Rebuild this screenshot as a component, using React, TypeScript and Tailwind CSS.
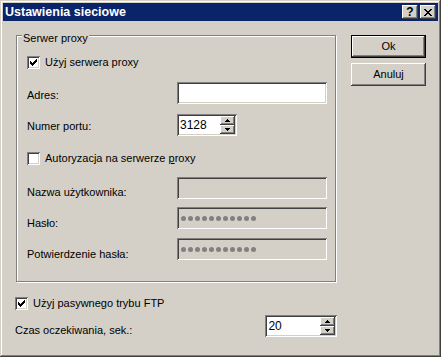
import React from "react";

const sunken =
  "shadow-[inset_1px_1px_0_#808080,inset_-1px_-1px_0_#ffffff,inset_2px_2px_0_#404040,inset_-2px_-2px_0_#d4d0c8]";
const raised =
  "shadow-[inset_-1px_-1px_0_#404040,inset_1px_1px_0_#ffffff,inset_-2px_-2px_0_#808080,inset_2px_2px_0_#d4d0c8]";

const Check = () => (
  <svg width="7" height="7" viewBox="0 0 7 7" shapeRendering="crispEdges">
    <path
      fill="#000"
      d="M6 0h1v1h-1z M5 1h2v1h-2z M0 2h1v1h-1z M4 2h3v1h-3z M0 3h2v1h-2z M3 3h3v1h-3z M0 4h5v1h-5z M1 5h3v1h-3z M2 6h1v1h-1z"
    />
  </svg>
);

const Checkbox = ({ checked, label }: { checked?: boolean; label: React.ReactNode }) => (
  <div className="flex items-center h-[13px]">
    <div className={`w-[13px] h-[13px] bg-white flex items-center justify-center ${sunken}`}>
      {checked && <Check />}
    </div>
    <span className="ml-[5px] leading-[13px]">{label}</span>
  </div>
);

const Field = ({
  width,
  disabled,
  children,
}: {
  width: string;
  disabled?: boolean;
  children?: React.ReactNode;
}) => (
  <div
    className={`${width} h-[22px] flex items-center pl-[4px] ${disabled ? "bg-[#d4d0c8]" : "bg-white"} ${sunken}`}
  >
    {children}
  </div>
);

const Dots = () => (
  <div className="flex gap-[2px]">
    {Array.from({ length: 11 }).map((_, i) => (
      <div key={i} className="w-[5px] h-[5px] rounded-full bg-[#808080]" />
    ))}
  </div>
);

const Arrow = ({ up }: { up?: boolean }) => (
  <svg width="5" height="3" viewBox="0 0 5 3" shapeRendering="crispEdges">
    <path fill="#000" d={up ? "M2 0h1v1h-1z M1 1h3v1h-3z M0 2h5v1h-5z" : "M0 0h5v1h-5z M1 1h3v1h-3z M2 2h1v1h-1z"} />
  </svg>
);

const Spin = ({ width, value }: { width: string; value: string }) => (
  <div className={`${width} h-[22px] bg-white flex p-[2px] ${sunken}`}>
    <span className="flex-1 pl-[1px] leading-[18px] text-[12px]">{value}</span>
    <div className="flex flex-col w-[15px]">
      <div className={`h-[9px] bg-[#d4d0c8] flex items-center justify-center ${raised}`}>
        <Arrow up />
      </div>
      <div className={`h-[9px] bg-[#d4d0c8] flex items-center justify-center ${raised}`}>
        <Arrow />
      </div>
    </div>
  </div>
);

const Row = ({ label, labelTop, top, children }: { label: string; labelTop: string; top: string; children: React.ReactNode }) => (
  <div className={`flex ${top}`}>
    <span className={`w-[150px] leading-[13px] ${labelTop}`}>{label}</span>
    {children}
  </div>
);

const Button = ({ children, isDefault }: { children: React.ReactNode; isDefault?: boolean }) => (
  <div
    className={`w-[75px] h-[23px] flex items-center justify-center bg-[#d4d0c8] ${
      isDefault
        ? "shadow-[inset_0_0_0_1px_#000,inset_-2px_-2px_0_#404040,inset_2px_2px_0_#ffffff,inset_-3px_-3px_0_#808080]"
        : raised
    }`}
  >
    {children}
  </div>
);

export default function App() {
  return (
    <div
      className="w-[441px] h-[357px] bg-[#d4d0c8] text-[11px] text-black p-[3px] flex flex-col shadow-[inset_-1px_-1px_0_#404040,inset_1px_1px_0_#d4d0c8,inset_-2px_-2px_0_#808080,inset_2px_2px_0_#ffffff]"
      style={{ fontFamily: '"Liberation Sans", Arial, sans-serif' }}
    >
      <div className="h-[18px] bg-[#0a246a] flex items-center pl-[2px] pr-[2px]">
        <span className="flex-1 text-white font-bold text-[12.5px] leading-[18px]">Ustawienia sieciowe</span>
        <div className={`w-[16px] h-[14px] bg-[#d4d0c8] flex items-center justify-center font-bold text-[12px] leading-[14px] ${raised}`}>
          ?
        </div>
        <div className={`ml-[2px] w-[16px] h-[14px] bg-[#d4d0c8] flex items-center justify-center ${raised}`}>
          <svg width="8" height="7" viewBox="0 0 8 7" shapeRendering="crispEdges">
            <path
              fill="#000"
              d="M0 0h2v1h-2z M6 0h2v1h-2z M1 1h2v1h-2z M5 1h2v1h-2z M2 2h4v1h-4z M3 3h2v1h-2z M2 4h4v1h-4z M1 5h2v1h-2z M5 5h2v1h-2z M0 6h2v1h-2z M6 6h2v1h-2z"
            />
          </svg>
        </div>
      </div>

      <div className="flex pl-[12px]">
        <div className="flex flex-col w-[322px]">
          <div className="relative ml-[1px] mt-[14px] w-[320px] h-[247px] border border-[#808080] shadow-[inset_1px_1px_0_#ffffff,1px_1px_0_#ffffff] pl-[10px] flex flex-col">
            <span className="absolute left-[5px] top-[-4px] px-[1px] bg-[#d4d0c8] leading-[13px]">Serwer proxy</span>
            <div className="mt-[20px]">
              <Checkbox checked label="Użyj serwera proxy" />
            </div>
            <Row label="Adres:" labelTop="mt-[7px]" top="mt-[13px]">
              <Field width="w-[150px]" />
            </Row>
            <Row label="Numer portu:" labelTop="mt-[6px]" top="mt-[10px]">
              <Spin width="w-[60px]" value="3128" />
            </Row>
            <div className="mt-[16px]">
              <Checkbox
                label={
                  <>
                    Autoryzacja na serwerze <span className="underline">p</span>roxy
                  </>
                }
              />
            </div>
            <Row label="Nazwa użytkownika:" labelTop="mt-[9px]" top="mt-[12px]">
              <Field width="w-[150px]" disabled />
            </Row>
            <Row label="Hasło:" labelTop="mt-[10px]" top="mt-[8px]">
              <Field width="w-[150px]" disabled>
                <Dots />
              </Field>
            </Row>
            <Row label="Potwierdzenie hasła:" labelTop="mt-[10px]" top="mt-[8px]">
              <Field width="w-[150px]" disabled>
                <Dots />
              </Field>
            </Row>
          </div>

          <div className="mt-[15px]">
            <Checkbox checked label="Użyj pasywnego trybu FTP" />
          </div>
          <div className="flex mt-[5px]">
            <span className="w-[252px] leading-[13px] mt-[9px]">Czas oczekiwania, sek.:</span>
            <Spin width="w-[72px]" value="20" />
          </div>
        </div>

        <div className="ml-[14px] mt-[14px] flex flex-col gap-[5px]">
          <Button isDefault>Ok</Button>
          <Button>Anuluj</Button>
        </div>
      </div>
    </div>
  );
}
